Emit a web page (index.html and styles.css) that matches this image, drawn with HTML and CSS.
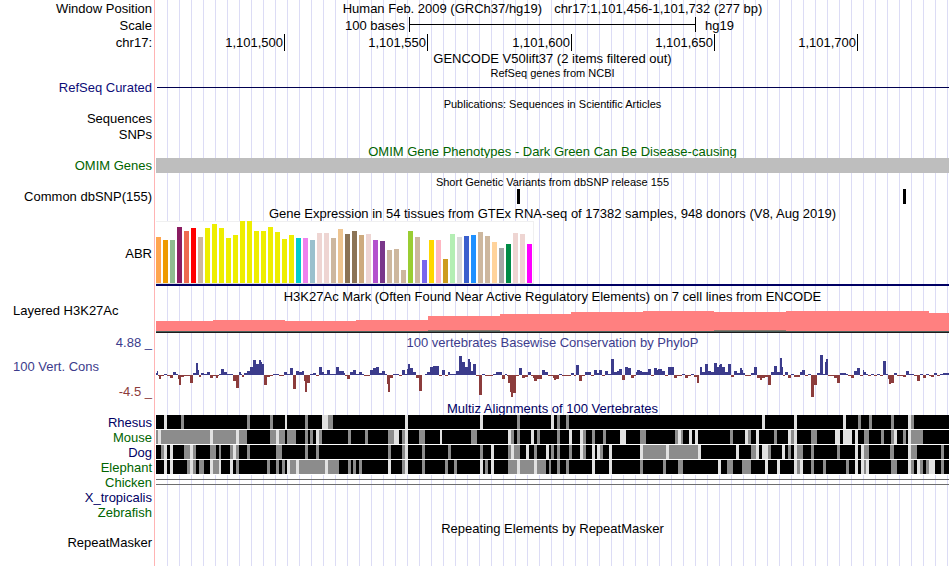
FILE: index.html
```html
<!DOCTYPE html>
<html lang="en">
<head>
  <meta charset="UTF-8" />
  <meta name="viewport" content="width=device-width, initial-scale=1.0" />
  <title>chr17:1,101,456-1,101,732 hg19</title>
  <link rel="stylesheet" href="styles.css">
</head>
<body>
  <main class="browser">
    <!-- ruler -->
    <section class="ruler">
      <div class="row tall">
        <div class="label">Window Position</div>
        <div class="title position"><span>Human Feb. 2009 (GRCh37/hg19)</span><span>chr17:1,101,456-1,101,732 (277 bp)</span></div>
      </div>
      <div class="row tall">
        <div class="label">Scale</div>
        <div class="scale"><span class="scale-text">100 bases</span><span class="scale-bar"></span><span class="scale-db">hg19</span></div>
      </div>
      <div class="row tall">
        <div class="label">chr17:</div>
        <div class="ticks"><span>1,101,500</span><span>1,101,550</span><span>1,101,600</span><span>1,101,650</span><span>1,101,700</span></div>
      </div>
    </section>

    <section class="genes">
      <h2 class="title">GENCODE V50lift37 (2 items filtered out)</h2>
      <h2 class="title small">RefSeq genes from NCBI</h2>
      <div class="row">
        <div class="label navy">RefSeq Curated</div>
        <div class="intron"></div>
      </div>
    </section>

    <section class="pubs">
      <h2 class="title small">Publications: Sequences in Scientific Articles</h2>
      <div class="row pub-row"><div class="label">Sequences</div></div>
      <div class="row"><div class="label">SNPs</div></div>
    </section>

    <section class="omim">
      <h2 class="title green">OMIM Gene Phenotypes - Dark Green Can Be Disease-causing</h2>
      <div class="row">
        <div class="label green">OMIM Genes</div>
        <div class="omim-item"></div>
      </div>
    </section>

    <section class="snps">
      <h2 class="title small">Short Genetic Variants from dbSNP release 155</h2>
      <div class="row">
        <div class="label">Common dbSNP(155)</div>
        <svg class="plot" viewBox="0 0 793 15" preserveAspectRatio="none"><path d="M361 0h3v15h-3zM747 0h3v15h-3z" /></svg>
      </div>
    </section>

    <section class="gtex">
      <h2 class="title">Gene Expression in 54 tissues from GTEx RNA-seq of 17382 samples, 948 donors (V8, Aug 2019)</h2>
      <div class="row gtex-row">
        <div class="label middle">ABR</div>
        <div class="gtex-plot"><div class="gtex-bars" id="gtex"></div></div>
      </div>
    </section>

    <section class="histone">
      <h2 class="title">H3K27Ac Mark (Often Found Near Active Regulatory Elements) on 7 cell lines from ENCODE</h2>
      <div class="row histone-row">
        <div class="label left">Layered H3K27Ac</div>
        <svg class="plot" viewBox="0 0 793 30" preserveAspectRatio="none">
          <path fill="#ff8080" d="M0 29V18H57V17H129V18H200V17H272V13H344V11H415V9H487V8H558V9H630V8H773V10H793V29z" />
          <path fill="#8a7468" d="M272 27h72v1h-72zM558 27h72v1h-72z" />
          <path fill="#4b5f5a" d="M0 28h793v1H0z" />
          <path fill="#1c1c1c" d="M0 29h793v1H0z" />
        </svg>
      </div>
    </section>

    <section class="cons">
      <div class="row">
        <div class="label blue">4.88 _</div>
        <h2 class="title blue">100 vertebrates Basewise Conservation by PhyloP</h2>
      </div>
      <div class="row cons-row">
        <div class="cons-labels">
          <div class="label left blue">100 Vert. Cons</div>
          <div class="label red">-4.5 _</div>
        </div>
        <svg class="plot" id="phylop" viewBox="0 0 793 51" preserveAspectRatio="none"></svg>
      </div>
    </section>

    <section class="multiz">
      <h2 class="title navy-dark">Multiz Alignments of 100 Vertebrates</h2>
      <div class="row"><div class="label navy-dark">Rhesus</div><svg class="plot align" data-species="rhesus" viewBox="0 0 793 14" preserveAspectRatio="none"></svg></div>
      <div class="row"><div class="label green">Mouse</div><svg class="plot align" data-species="mouse" viewBox="0 0 793 14" preserveAspectRatio="none"></svg></div>
      <div class="row"><div class="label navy-dark">Dog</div><svg class="plot align" data-species="dog" viewBox="0 0 793 14" preserveAspectRatio="none"></svg></div>
      <div class="row"><div class="label green">Elephant</div><svg class="plot align" data-species="elephant" viewBox="0 0 793 14" preserveAspectRatio="none"></svg></div>
      <div class="row"><div class="label green">Chicken</div><div class="unaligned"></div></div>
      <div class="row"><div class="label navy-dark">X_tropicalis</div></div>
      <div class="row"><div class="label green">Zebrafish</div></div>
    </section>

    <section class="repeats">
      <h2 class="title">Repeating Elements by RepeatMasker</h2>
      <div class="row"><div class="label">RepeatMasker</div></div>
    </section>
  </main>
  <script src="tracks.js"></script>
</body>
</html>
```

FILE: styles.css
```css
body {
  margin: 0;
  background: #fff;
  color: #000;
  font-family: "Liberation Sans", Arial, Helvetica, sans-serif;
  font-size: 13px;
  line-height: 15px;
}
.browser {
  box-sizing: border-box;
  min-height: 100vh;
  padding-right: 1px;
  /* label area, red divider, then a guide line every 12px */
  background:
    linear-gradient(#ffb4b4, #ffb4b4) 154px 0 / 1px 100% no-repeat,
    linear-gradient(#fff, #fff) 0 0 / 156px 100% no-repeat,
    repeating-linear-gradient(90deg, #fff 0 11px, #dcdcf5 11px 12px) 156px 0 no-repeat;
}
.row {
  display: grid;
  grid-template-columns: 152px 1fr;
  column-gap: 4px;
  height: 15px;
}
.row.tall {
  height: 17px;
  line-height: 17px;
}
.label {
  text-align: right;
  white-space: nowrap;
}
.label.left {
  text-align: left;
  padding-left: 13px;
}
.label.middle {
  align-self: center;
}
.title {
  margin: 0 0 0 156px;
  font-size: 13px;
  font-weight: normal;
  text-align: center;
  white-space: nowrap;
  height: 15px;
}
.row .title {
  margin-left: 0;
}
.title.small {
  font-size: 11px;
  height: 14px;
}
.plot {
  display: block;
  width: 100%;
  height: 100%;
  shape-rendering: crispEdges;
}

.navy { color: #0c0c78; }
.navy-dark { color: #000064; }
.green { color: #006400; }
.blue { color: #3c3c8c; }
.red { color: #8c3c3c; }

/* ruler */
.position {
  display: flex;
  justify-content: center;
  gap: 12px;
}
.scale {
  display: grid;
  grid-template-columns: 253fr 287fr 253fr;
}
.scale-text {
  text-align: right;
  padding-right: 4px;
}
.scale-bar {
  height: 15px;
  border-left: 1px solid #000;
  border-right: 1px solid #000;
  background: linear-gradient(#000, #000) 0 7px / 100% 1px no-repeat;
}
.scale-db {
  padding-left: 9px;
}
.ticks {
  display: grid;
  grid-template-columns: 129fr 143fr 144fr 143fr 143fr 91fr;
  height: 15px;
}
.ticks span {
  border-right: 1px solid #000;
  padding-right: 1px;
  text-align: right;
}

/* genes, publications, variants */
.intron {
  height: 1px;
  margin: 7px 0 0 1px;
  background: #000050;
}
.pubs {
  padding-top: 2px;
}
.pub-row {
  height: 16px;
}
.omim {
  padding-top: 2px;
}
.omim .title {
  height: 14px;
}
.omim-item {
  background: #bebebe;
}
.snps {
  padding-top: 2px;
}

/* expression bars */
.gtex {
  padding-top: 2px;
}
.gtex-row {
  height: 65px;
}
.gtex-plot {
  border-bottom: 2px solid #000064;
}
.gtex-bars {
  display: flex;
  align-items: flex-end;
  gap: 2px;
  box-sizing: border-box;
  width: 378px;
  height: 63px;
  background: #fff;
  border-top: 1px solid #f0f0f0;
  border-right: 1px solid #f0f0f0;
  border-bottom: 1px solid #dcdcdc;
}
.gtex-bars span {
  flex: none;
  width: 5px;
}

.histone {
  padding-top: 3px;
}
.histone .title {
  height: 14px;
}
.histone-row {
  height: 30px;
}

/* conservation */
.cons {
  padding-top: 2px;
}
.cons-row {
  height: 51px;
}
.cons-labels {
  display: flex;
  flex-direction: column;
  justify-content: space-between;
  padding: 9px 0 2px;
}

/* alignments */
.multiz .title {
  height: 14px;
}
.align {
  height: 14px;
  background: #000;
  border-bottom: 1px solid #fff;
}
.unaligned {
  height: 4px;
  margin-top: 4px;
  border-top: 1px solid #6e6e6e;
  border-bottom: 1px solid #6e6e6e;
}
.repeats {
  padding-top: 1px;
}
.repeats .title {
  height: 14px;
}
```

FILE: tracks.js
```js
const SVG = "http://www.w3.org/2000/svg";

function addRect(svg, x, y, w, h, fill) {
  const r = document.createElementNS(SVG, "rect");
  r.setAttribute("x", x);
  r.setAttribute("y", y);
  r.setAttribute("width", w);
  r.setAttribute("height", h);
  r.setAttribute("fill", fill);
  svg.appendChild(r);
}

// GTEx tissues: colour, bar height
const tissues = [
  "ffa54f 46", "ee9a00 43", "8fbc8f 43", "8b1c62 56", "ee6a50 52", "ff0000 55", "cdb79e 46",
  "eeee00 55", "eeee00 59", "eeee00 55", "eeee00 45", "eeee00 48", "eeee00 62", "eeee00 62",
  "eeee00 52", "eeee00 52", "eeee00 56", "eeee00 51", "eeee00 44", "eeee00 48",
  "00cdcd 45", "ee82ee 45", "9ac0cd 43", "eed5d2 50", "eed5d2 50", "cdb79e 45", "eec591 54",
  "8b7355 49", "8b7355 52", "cdaa7d 48", "eed5d2 49", "b452cd 43", "7a378b 42", "cdb79e 33",
  "cdb79e 34", "cdb79e 13", "9acd32 52", "cdb79e 46", "7a67ee 23", "ffd700 43", "ffb6c1 43",
  "cd9b1d 24", "b4eeb4 49", "d9d9d9 46", "3a5fcd 47", "1e90ff 48", "cdb79e 51", "cdb79e 47",
  "ffd39b 41", "a6a6a6 35", "008b45 39", "eed5d2 50", "eed5d2 49", "ff00ff 39"
];
const gtex = document.getElementById("gtex");
tissues.forEach(t => {
  const [color, height] = t.split(" ");
  const bar = document.createElement("span");
  bar.style.background = "#" + color;
  bar.style.height = height + "px";
  gtex.appendChild(bar);
});

// PhyloP runs: end position, score height
const phylop = `
1:2 2:4 3:-1 5:-4 8:-1 11:1 14:-1 17:-3 20:3 22:1 23:-4 25:-10 28:-2 34:-1 37:-8 40:2 42:12 43:5
45:-2 48:2 51:1 54:3 57:-3 60:-1 62:-3 63:-1 65:1 68:6 71:3 77:1 80:-6 83:-13 85:3 86:1 88:-2
91:2 94:4 97:8 100:15 103:11 105:15 106:13 108:11 111:-10 114:-2 117:-1 123:1 128:-1 131:3 134:1
137:7 140:-14 143:4 146:3 148:4 149:-6 151:-17 154:-8 157:1 160:2 163:-1 166:8 168:3 171:1 174:5
180:1 183:8 188:4 189:2 191:-1 194:-4 197:3 200:5 203:1 206:3 208:1 214:-1 217:5 220:7 223:8
226:2 229:4 231:1 232:-9 234:-17 237:-3 243:1 246:-1 249:5 251:1 252:6 254:11 257:7 260:3 263:-3
266:-16 269:0 271:1 274:3 277:8 283:9 286:-1 289:5 292:-1 294:3 300:1 303:4 306:19 309:13 312:8
314:16 315:13 317:4 320:11 323:-1 326:-20 329:1 337:-1 340:1 346:3 349:-4 351:1 352:-1 354:-8
355:-17 357:-22 360:-18 363:-1 366:7 369:-3 372:-2 375:3 377:-1 378:-3 381:-6 386:-4 389:5 392:3
397:-1 398:-3 400:-5 403:-4 406:1 415:-1 418:2 420:-1 423:10 426:-6 429:-1 435:3 438:-1 441:5
443:2 446:5 449:-1 452:4 455:1 458:16 461:3 463:4 466:6 469:-5 472:8 475:7 478:-3 480:-1 481:3
484:5 486:4 492:3 495:6 498:-1 501:7 502:5 506:6 509:4 512:-1 518:8 521:-3 526:-1 529:1
532:-3 535:-1 538:1 541:-2 543:-8 544:0 546:8 549:3 552:11 555:4 558:3 561:12 563:8 564:10 566:11
569:8 572:3 575:11 578:-2 581:4 584:2 586:7 587:5 589:2 595:-1 598:2 601:8 604:-3 606:-5 609:-3
612:-2 615:-10 618:3 621:9 624:3 626:17 627:8 629:-1 632:3 635:-3 638:1 644:-2 646:3 649:5 652:-1
655:1 658:-22 661:-10 664:2 667:20 669:1 670:13 672:16 678:-1 681:-3 684:-8 690:2 692:1 695:-1
698:-3 701:4 704:7 707:-1 708:5 710:3 712:1 715:-1 718:1 721:-1 724:1 727:-1 730:14 732:1 733:-4
735:-9 738:-8 741:2 747:-1 750:-2 753:4 758:1 761:-1 764:-6 767:1 770:-3 773:1 775:-1 778:-2
781:2 784:-1 787:1 793:2`;
const cons = document.getElementById("phylop");
const baseline = 25;
let start = 0;
phylop.trim().split(/\s+/).forEach(run => {
  const [end, score] = run.split(":").map(Number);
  if (score > 0) addRect(cons, start, baseline - score, end - start, score, "#3c3c8c");
  if (score < 0) addRect(cons, start, baseline, end - start, -score, "#8c3c3c");
  start = end;
});

// alignment blocks: G = mismatch, L = weak; position, width (3 when left out)
const alignments = {
  rhesus: `L8 G25 G91 G114 L129,2 G149 L166,6 G172,5 L249 L324 G361 L395 G401 G410 L606 L638 L687
    G702 G713 G735 L752 G755`,
  mouse: `G0,2 L2 G5,49 L54 G57,23 L80 G83,8 G114,6 L120 G123,6 G131,9 G149 G154 L160 G163 G192
    G209 G232,6 L238,5 G246 L249 G263,6 L284,2 G315,6 L352 G355 G361 L375 G381 G401 L413 L424 G427
    G436 G447 L464,6 G484,6 G519 L522 G525,2 L533 L539 G574 L589 G592 L600 G618 L632 G635 L638
    G655,6 L679,5 L687,9 L699 G708,5 G725 G735 L738 G747 L752 G755,12`,
  dog: `G5 L8 L14 G28,6 L34 G37 G54,6 G63,2 G74 L77 G80 G91 G120,6 G149 G160 G232 G246 L249 G266
    G292 G324 L335 G352 L355 G358,6 L370 G378 L390 G395 G401 G413 L424 G427 L436 L441 G444 L453
    L484 G487,23 L510 G513,29 L542 L580 G595,5 L600 L606,6 G612 L626 G632 L638 G641,6 G655 G681
    L699 L705 G708,5 G734,4 L752 G755,6 G785`,
  elephant: `L8 L14 G31 L34 G37 G43,5 L54 G57,6 L63,2 L74 G80 G111 G120 G126 L131 G134,6 L140
    G143,26 L169 G172,11 G192 G197 G203 L232 G246 L249 G266 G289 G298 L324 G329 L335 G352,9 L361
    G364,14 L378 G381,9 G393,2 G401 G410 L436 L453 G484 G507 G522,5 L562 G571,6 G586,9 L609 L621
    L638 G641 L644 G655 G667 G690 L699 L705 G708,2 L710 G735,6 L752 G755 L761 G764 G770 L773,6 G785`
};
document.querySelectorAll(".align").forEach(svg => {
  alignments[svg.dataset.species].split(/\s+/).forEach(block => {
    const [x, w = 3] = block.slice(1).split(",");
    addRect(svg, x, 0, w, 14, block[0] === "L" ? "#e1e1e1" : "#8c8c8c");
  });
});
```
